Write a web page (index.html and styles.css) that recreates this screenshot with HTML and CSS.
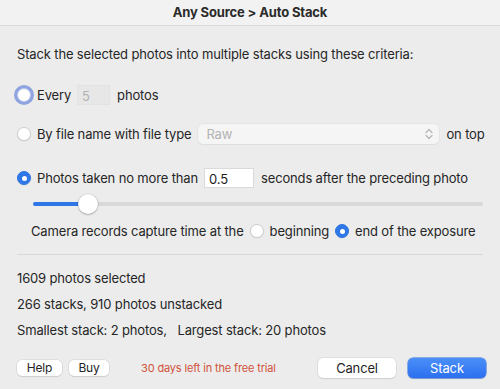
FILE: index.html
```html
<!DOCTYPE html>
<html lang="en">
<head>
    <meta charset="UTF-8">
    <meta name="viewport" content="width=device-width, initial-scale=1.0">
    <title>Any Source &gt; Auto Stack</title>
    <link rel="stylesheet" href="styles.css">
</head>
<body>

<div class="window">
    <div class="titlebar">Any Source &gt; Auto Stack</div>

    <div class="content">
        <p class="intro">Stack the selected photos into multiple stacks using these criteria:</p>

        <div class="row row-every">
            <span class="radio focused"></span>
            <span class="label">Every</span>
            <span class="field field-count">5</span>
            <span class="label">photos</span>
        </div>

        <div class="row row-name">
            <span class="radio"></span>
            <span class="label">By file name with file type</span>
            <span class="select">
                <span>Raw</span>
                <svg class="chevron" width="8" height="12" viewBox="0 0 8 12">
                    <path d="M1 4.5 L4 1.5 L7 4.5 M1 7.5 L4 10.5 L7 7.5" fill="none" stroke="#b5b5b5" stroke-width="1.2" stroke-linecap="round" stroke-linejoin="round"/>
                </svg>
            </span>
            <span class="label">on top</span>
        </div>

        <div class="row row-time">
            <span class="radio checked"></span>
            <span class="label">Photos taken no more than</span>
            <span class="field field-seconds">0.5</span>
            <span class="label">seconds after the preceding photo</span>
        </div>

        <div class="slider">
            <div class="track">
                <div class="fill" style="width: 55px"></div>
                <div class="knob" style="left: 55px"></div>
            </div>
        </div>

        <div class="row row-camera">
            <span class="label">Camera records capture time at the</span>
            <span class="radio small"></span>
            <span class="label">beginning</span>
            <span class="radio small checked"></span>
            <span class="label">end of the exposure</span>
        </div>

        <hr class="divider">

        <p class="stat first">1609 photos selected</p>
        <p class="stat">266 stacks, 910 photos unstacked</p>
        <p class="stat">Smallest stack: 2 photos,&nbsp;&nbsp; Largest stack: 20 photos</p>

        <div class="footer">
            <button class="btn btn-small">Help</button>
            <button class="btn btn-small btn-buy">Buy</button>
            <span class="trial">30 days left in the free trial</span>
            <button class="btn btn-cancel">Cancel</button>
            <button class="btn btn-primary">Stack</button>
        </div>
    </div>
</div>

</body>
</html>
```

FILE: styles.css
```css
body {
    margin: 0;
    padding: 0;
    background-color: #ececec;
    font-family: Inter, "Noto Sans", sans-serif;
    font-size: 13px;
    letter-spacing: -0.15px;
    color: #262626;
}

.window {
    width: 500px;
    height: 389px;
    overflow: hidden;
}

.titlebar {
    height: 25px;
    line-height: 25px;
    text-align: center;
    font-weight: bold;
    font-size: 13px;
    color: #2b2b2b;
    background-color: #f2f2f2;
    border-bottom: 1px solid #d9d9d9;
}

.content {
    padding: 0 17px;
}

.intro {
    margin: 18px 0 0;
    height: 20px;
    line-height: 20px;
    white-space: nowrap;
}

.row {
    display: flex;
    align-items: center;
    height: 24px;
    white-space: nowrap;
}

.label {
    flex: none;
}

.row-every {
    margin-top: 19px;
}

.row-name {
    margin-top: 15px;
}

.row-time {
    margin-top: 20px;
}

.radio {
    width: 12px;
    height: 12px;
    border-radius: 50%;
    background-color: #fff;
    border: 1px solid #cfcfcf;
    box-shadow: 0 0.5px 1px rgba(0, 0, 0, 0.1);
    flex: none;
    margin-right: 6px;
    position: relative;
}

.radio.focused {
    margin-left: 0;
    margin-right: 6px;
    border-color: #b9c7ea;
    box-shadow: 0 0 0 3px #8ea3df;
}

.radio.checked {
    background-color: #2f76e6;
    border-color: #2f76e6;
}

.radio.checked::after {
    content: "";
    position: absolute;
    left: 3.5px;
    top: 3.5px;
    width: 5px;
    height: 5px;
    border-radius: 50%;
    background-color: #fff;
}

.row-every .label:nth-child(2) {
    margin-right: 6px;
}

.field {
    flex: none;
    height: 20px;
    line-height: 20px;
    box-sizing: border-box;
    padding: 0 4px;
    margin-right: 7px;
}

.field-count {
    width: 33px;
    color: #b3b3b3;
    background-color: #e7e7e7;
    border: 1px solid #e2e2e2;
}

.field-seconds {
    width: 50px;
    background-color: #fff;
    border: 1px solid #dadada;
    margin-left: 6px;
    color: #1d1d1d;
}

.select {
    flex: none;
    display: flex;
    align-items: center;
    justify-content: space-between;
    width: 241px;
    height: 20px;
    box-sizing: border-box;
    margin-left: 7px;
    margin-right: 7px;
    padding: 0 6px 0 8px;
    background-color: #f5f5f5;
    border-radius: 5px;
    box-shadow: 0 0 0 0.5px #dedede, 0 1px 1px rgba(0, 0, 0, 0.06);
    color: #b3b3b3;
}

.slider {
    margin-top: 4px;
    height: 20px;
    display: flex;
    align-items: center;
    padding-left: 16px;
}

.track {
    position: relative;
    width: 454px;
    height: 4px;
    border-radius: 2px;
    background-color: #d9d9d9;
}

.fill {
    height: 4px;
    border-radius: 2px;
    background-color: #2f76e6;
}

.knob {
    position: absolute;
    top: -8px;
    width: 20px;
    height: 20px;
    margin-left: -10px;
    border-radius: 50%;
    background-color: #fff;
    box-shadow: 0 0 0 0.5px rgba(0, 0, 0, 0.15), 0 1px 2px rgba(0, 0, 0, 0.2);
}

.row-camera {
    margin-top: 7px;
    height: 20px;
    padding-left: 14px;
}

.row-camera .label:first-child {
    margin-right: 6px;
}

.row-camera .label:nth-child(3) {
    margin-right: 6px;
}

.divider {
    margin: 13px 0 0;
    border: none;
    border-top: 1px solid #d8d8d8;
}

.stat {
    margin: 6px 0 0;
    height: 20px;
    line-height: 20px;
}

.stat.first {
    margin-top: 13px;
}

.footer {
    display: flex;
    align-items: center;
    margin-top: 17px;
    margin-right: -3px;
    height: 22px;
}

.btn {
    flex: none;
    font-family: inherit;
    font-size: 13px;
    letter-spacing: inherit;
    color: #262626;
    background-color: #fff;
    border: none;
    border-radius: 5px;
    box-shadow: 0 0 0 0.5px #cfcfcf, 0 1px 1px rgba(0, 0, 0, 0.12);
    padding: 0;
    cursor: pointer;
}

.btn-small {
    width: 45px;
    height: 16px;
    font-size: 12px;
    line-height: 16px;
}

.btn-buy {
    width: 40px;
    margin-left: 7px;
}

.trial {
    margin-left: 32px;
    font-size: 11px;
    color: #d0533b;
    flex: 1;
    white-space: nowrap;
}

.btn-cancel {
    width: 78px;
    height: 20px;
}

.btn-primary {
    width: 78px;
    height: 20px;
    margin-left: 12px;
    color: #fff;
    background: linear-gradient(#4b8ff8, #2c6ff0);
    box-shadow: 0 0 0 0.5px #2b68d8, 0 1px 1px rgba(0, 0, 0, 0.15);
}
```
